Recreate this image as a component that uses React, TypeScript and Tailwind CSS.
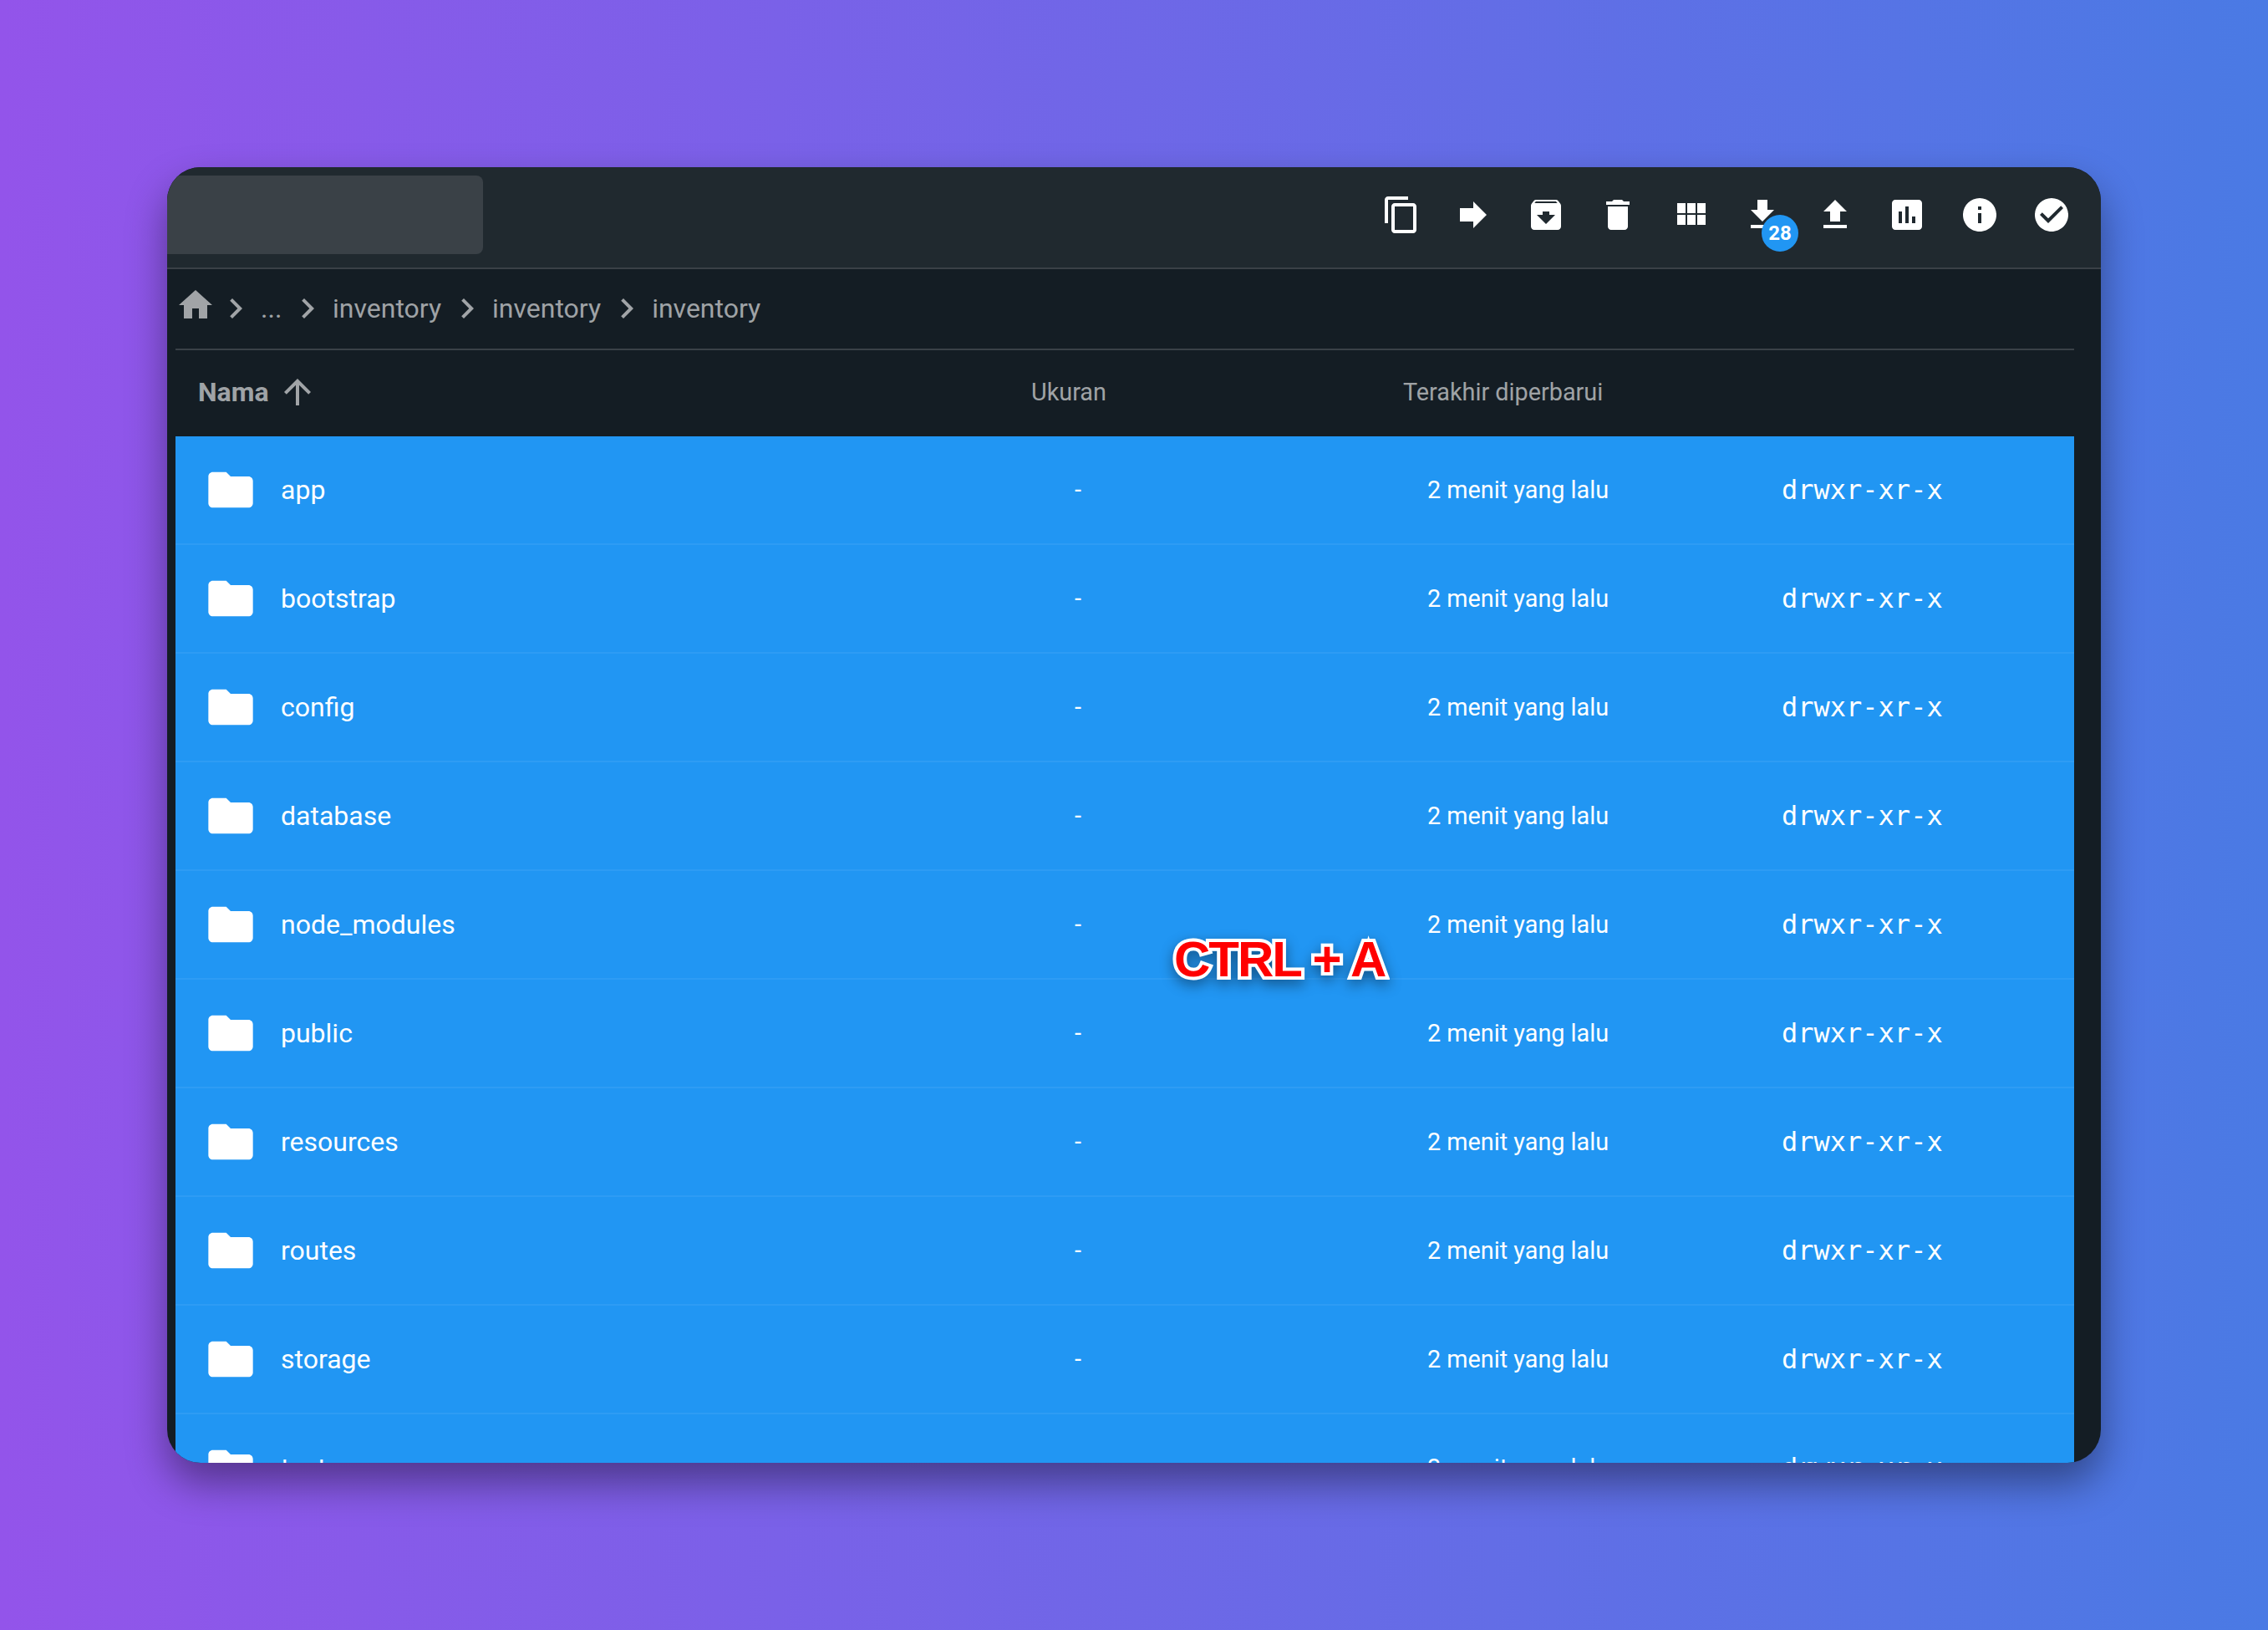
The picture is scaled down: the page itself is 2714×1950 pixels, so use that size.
const P = {
  copy: "M16 1H4c-1.1 0-2 .9-2 2v14h2V3h12V1zm3 4H8c-1.1 0-2 .9-2 2v14c0 1.1.9 2 2 2h11c1.1 0 2-.9 2-2V7c0-1.1-.9-2-2-2zm0 16H8V7h11v14z",
  forward: "M12 8V4l8 8-8 8v-4H4V8z",
  archive: "M20.54 5.23l-1.39-1.68C18.88 3.21 18.47 3 18 3H6c-.47 0-.88.21-1.16.55L3.46 5.23C3.17 5.57 3 6.02 3 6.5V19c0 1.1.9 2 2 2h14c1.1 0 2-.9 2-2V6.5c0-.48-.17-.93-.46-1.27zM12 17.5L6.5 12H10v-2h4v2h3.5L12 17.5zM5.12 5l.81-1h12l.94 1H5.12z",
  del: "M6 19c0 1.1.9 2 2 2h8c1.1 0 2-.9 2-2V7H6v12zM19 4h-3.5l-1-1h-5l-1 1H5v2h14V4z",
  grid: "M4 11h5V5H4v6zm0 7h5v-6H4v6zm6 0h5v-6h-5v6zm6 0h5v-6h-5v6zm-6-7h5V5h-5v6zm6-6v6h5V5h-5z",
  down: "M19 9h-4V3H9v6H5l7 7 7-7zM5 18v2h14v-2H5z",
  up: "M9 16h6v-6h4l-7-7-7 7h4zm-4 2h14v2H5z",
  chart: "M19 3H5c-1.1 0-2 .9-2 2v14c0 1.1.9 2 2 2h14c1.1 0 2-.9 2-2V5c0-1.1-.9-2-2-2zM9 17H7v-7h2v7zm4 0h-2V7h2v10zm4 0h-2v-4h2v4z",
  info: "M12 2C6.48 2 2 6.48 2 12s4.48 10 10 10 10-4.48 10-10S17.52 2 12 2zm1 15h-2v-6h2v6zm0-8h-2V7h2v2z",
  check: "M12 2C6.48 2 2 6.48 2 12s4.48 10 10 10 10-4.48 10-10S17.52 2 12 2zm-2 15l-5-5 1.41-1.41L10 14.17l7.59-7.59L19 8l-9 9z",
  home: "M10 20v-6h4v6h5v-8h3L12 3 2 12h3v8z",
  folder: "M10 4H4c-1.1 0-1.99.9-1.99 2L2 18c0 1.1.9 2 2 2h16c1.1 0 2-.9 2-2V8c0-1.1-.9-2-2-2h-8l-2-2z",
  arrowUp: "M4 12l1.41 1.41L11 7.83V20h2V7.83l5.58 5.59L20 12l-8-8-8 8z",
  chevron: "M10 6L8.59 7.41 13.17 12l-4.58 4.59L10 18l6-6z",
};

function Icon({ d, className }: { d: string; className: string }) {
  return (
    <svg viewBox="0 0 24 24" fill="currentColor" className={className}>
      <path d={d} />
    </svg>
  );
}

const tools = [P.copy, P.forward, P.archive, P.del, P.grid, P.down, P.up, P.chart, P.info, P.check];
const folders = ["app", "bootstrap", "config", "database", "node_modules", "public", "resources", "routes", "storage", "tests"];

function Sep() {
  return <Icon d={P.chevron} className="w-12 h-12 shrink-0 mt-[4px] ml-[7px] text-white/60" />;
}

export default function App() {
  return (
    <div className="w-[2714px] h-[1950px] p-[200px] bg-linear-to-r/srgb from-[#9354ea] to-[#4a7ae4] font-['Roboto',sans-serif]">
      <div className="relative w-[2314px] h-[1550px] rounded-[40px] overflow-hidden bg-[#141d24] shadow-[0_24px_48px_rgba(0,0,0,0.4)]">
        <header className="h-[122px] bg-[#20292f] border-b-2 border-[#3a4147] flex justify-between">
          <div className="w-[378px] h-[94px] mt-[10px] bg-[#3a4147] rounded-r-lg" />
          <div className="flex mt-[33px] pr-[35px] gap-[38.5px] h-12">
            {tools.map((d, i) => (
              <div key={i} className="relative w-12 h-12 text-white">
                <Icon d={d} className="w-12 h-12" />
                {d === P.down && (
                  <span className="absolute left-[23px] top-[24px] w-11 h-11 rounded-full bg-[#2196f3] flex items-center justify-center text-[24px] font-bold leading-none">28</span>
                )}
              </div>
            ))}
          </div>
        </header>

        <nav className="h-[95px] pl-[10px] flex items-start pt-[19px] text-white/60 text-[32px] leading-[48px]">
          <Icon d={P.home} className="w-12 h-12 shrink-0" />
          <Icon d={P.chevron} className="w-12 h-12 shrink-0 mt-[4px] text-white/60" />
          <span className="ml-[6px] mt-[4px] w-[25px]">...</span>
          <Sep />
          <span className="mt-[4px] ml-[6px]">inventory</span>
          <Sep />
          <span className="mt-[4px] ml-[6px]">inventory</span>
          <Sep />
          <span className="mt-[4px] ml-[6px]">inventory</span>
        </nav>

        <div className="ml-[10px] w-[2272px]">
          <div className="h-[105px] pb-[3px] border-t-2 border-[#3a4147] grid grid-cols-[1024px_445px_1fr] items-center text-white/60 text-[28.8px]">
            <div className="pl-[27px] flex items-center font-bold text-[32px]">
              Nama
              <Icon d={P.arrowUp} className="w-12 h-12 ml-[10px]" />
            </div>
            <div className="pt-[2px]">Ukuran</div>
            <div className="pt-[2px]">Terakhir diperbarui</div>
          </div>
          {folders.map((name) => (
            <div key={name} className="h-[130px] bg-[#2196f3] border-b-2 border-[#2e9cf4] text-white grid grid-cols-[1024px_112px_786px_1fr] items-center text-[28.8px]">
              <div className="pl-[34px] flex items-center text-[32px]">
                <Icon d={P.folder} className="w-16 h-16 shrink-0" />
                <span className="ml-[28px]">{name}</span>
              </div>
              <div className="text-center pt-[2px]">-</div>
              <div className="pl-[362px] pt-[2px]">2 menit yang lalu</div>
              <div className="font-['DejaVu_Sans_Mono',monospace] text-[32px]">drwxr-xr-x</div>
            </div>
          ))}
        </div>

        <div className="absolute left-[1205px] top-[913px] font-['Liberation_Sans',sans-serif] font-bold text-[60px] leading-[70px] tracking-[-2px] text-[#ff0000] [-webkit-text-stroke:8px_white] [paint-order:stroke_fill] [filter:drop-shadow(0_6px_8px_rgba(0,0,0,0.4))]">
          CTRL + A
        </div>
      </div>
    </div>
  );
}
